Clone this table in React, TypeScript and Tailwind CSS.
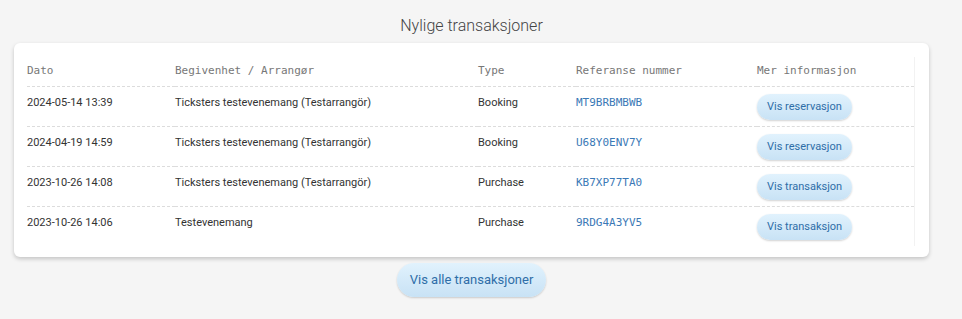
import React from "react"

interface Transaction {
  date: string
  event: string
  type: string
  ref: string
  action: string
}

const transactions: Transaction[] = [
  { date: "2024-05-14 13:39", event: "Ticksters testevenemang (Testarrangör)", type: "Booking", ref: "MT9BRBMBWB", action: "Vis reservasjon" },
  { date: "2024-04-19 14:59", event: "Ticksters testevenemang (Testarrangör)", type: "Booking", ref: "U68Y0ENV7Y", action: "Vis reservasjon" },
  { date: "2023-10-26 14:08", event: "Ticksters testevenemang (Testarrangör)", type: "Purchase", ref: "KB7XP77TA0", action: "Vis transaksjon" },
  { date: "2023-10-26 14:06", event: "Testevenemang", type: "Purchase", ref: "9RDG4A3YV5", action: "Vis transaksjon" },
]

const mono = "font-['DejaVu_Sans_Mono',monospace]"

function PillButton({ children, big }: { children: React.ReactNode; big?: boolean }) {
  return (
    <button
      type="button"
      className={`rounded-full bg-gradient-to-b from-[#e1f2fd] to-[#c8e2f5] text-[#2f6ea8] shadow-[0_1px_2px_rgba(0,0,0,0.18)] ${
        big ? "h-[34px] px-[13px] text-[13px]" : "h-[26px] px-[10px] text-[11px]"
      }`}
    >
      {children}
    </button>
  )
}

export default function App() {
  return (
    <div className="min-h-[319px] bg-[#f5f5f5] font-['Roboto',sans-serif] pt-[16px] pb-[20px]">
      <div className="w-[915px] ml-[14px] flex flex-col items-center">
        <h2 className="text-[16px] leading-[20px] font-light text-[#444]">Nylige transaksjoner</h2>

        <div className="mt-[7px] w-full rounded-[6px] bg-white px-[13px] pr-[14px] pt-[14px] pb-[11px] shadow-[0_2px_4px_rgba(0,0,0,0.2)]">
          <table className="w-full table-fixed border-collapse border-r border-[#f2f2f2]">
            <colgroup>
              <col className="w-[148px]" />
              <col className="w-[303px]" />
              <col className="w-[98px]" />
              <col className="w-[181px]" />
              <col />
            </colgroup>
            <thead>
              <tr className={`h-[29px] border-b border-dashed border-[#dcdcdc] text-left text-[11px] text-[#777] ${mono}`}>
                <th className="font-normal">Dato</th>
                <th className="font-normal">Begivenhet / Arrangør</th>
                <th className="font-normal">Type</th>
                <th className="font-normal">Referanse nummer</th>
                <th className="font-normal">Mer informasjon</th>
              </tr>
            </thead>
            <tbody>
              {transactions.map((t, i) => (
                <tr
                  key={t.ref}
                  className={`h-[40px] align-top text-[11px] leading-[13px] text-[#333] ${
                    i < transactions.length - 1 ? "border-b border-dashed border-[#dcdcdc]" : ""
                  }`}
                >
                  <td className="pt-[9px]">{t.date}</td>
                  <td className="pt-[9px]">{t.event}</td>
                  <td className="pt-[9px]">{t.type}</td>
                  <td className={`pt-[9px] text-[#3b79b6] ${mono}`}>{t.ref}</td>
                  <td className="pt-[7px]">
                    <PillButton>{t.action}</PillButton>
                  </td>
                </tr>
              ))}
            </tbody>
          </table>
        </div>

        <div className="mt-[6px]">
          <PillButton big>Vis alle transaksjoner</PillButton>
        </div>
      </div>
    </div>
  )
}
